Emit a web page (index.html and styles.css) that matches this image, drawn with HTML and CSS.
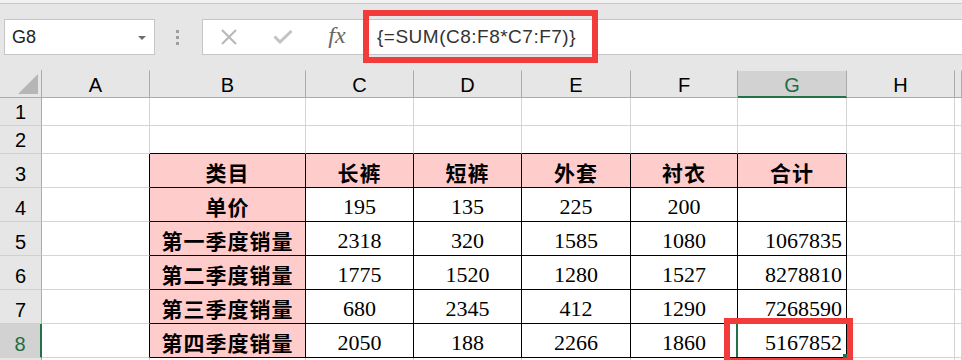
FILE: index.html
```html
<!DOCTYPE html>
<html lang="zh">
<head>
<meta charset="utf-8">
<link rel="stylesheet" href="styles.css">
</head>
<body>
<div class="toolbar">
  <div class="topstrip"></div>
  <div class="bar">
    <div class="namebox"><span class="nametext">G8</span><span class="dropdown"></span></div>
    <div class="dots"><i></i><i></i><i></i></div>
    <div class="fbox">
      <span class="ico"><svg width="18" height="16" viewBox="0 0 18 16"><path d="M2 1 L16 15 M16 1 L2 15" stroke="#b9b9b9" stroke-width="2.2" fill="none"/></svg></span>
      <span class="ico"><svg width="20" height="14" viewBox="0 0 20 14"><path d="M1.5 6.5 L7 12 L18.5 1" stroke="#c3c3c3" stroke-width="3" fill="none"/></svg></span>
      <span class="ico fx">fx</span>
      <span class="formula">{=SUM(C8:F8*C7:F7)}</span>
      <div class="redbox1"></div>
    </div>
  </div>
</div>
<div class="grid">
  <div class="corner"><svg width="20" height="20" viewBox="0 0 20 20"><path d="M20 0 L20 20 L0 20 Z" fill="#b6b6b6"/></svg></div>
  <div class="ch">A</div><div class="ch">B</div><div class="ch">C</div><div class="ch">D</div><div class="ch">E</div><div class="ch">F</div><div class="ch sel">G</div><div class="ch">H</div><div class="ch"></div>

  <div class="rh">1</div><div class="c"></div><div class="c"></div><div class="c"></div><div class="c"></div><div class="c"></div><div class="c"></div><div class="c"></div><div class="c"></div><div class="c"></div>

  <div class="rh">2</div><div class="c"></div><div class="c tb"></div><div class="c tb"></div><div class="c tb"></div><div class="c tb"></div><div class="c tb"></div><div class="c tb"></div><div class="c"></div><div class="c"></div>

  <div class="rh">3</div><div class="c tl"></div><div class="c t pk lb">类目</div><div class="c t pk lb">长裤</div><div class="c t pk lb">短裤</div><div class="c t pk lb">外套</div><div class="c t pk lb">衬衣</div><div class="c t pk lb">合计</div><div class="c"></div><div class="c"></div>

  <div class="rh">4</div><div class="c tl"></div><div class="c t pk lb">单价</div><div class="c t num">195</div><div class="c t num">135</div><div class="c t num">225</div><div class="c t num">200</div><div class="c t num r"></div><div class="c"></div><div class="c"></div>

  <div class="rh">5</div><div class="c tl"></div><div class="c t pk lb">第一季度销量</div><div class="c t num">2318</div><div class="c t num">320</div><div class="c t num">1585</div><div class="c t num">1080</div><div class="c t num r">1067835</div><div class="c"></div><div class="c"></div>

  <div class="rh">6</div><div class="c tl"></div><div class="c t pk lb">第二季度销量</div><div class="c t num">1775</div><div class="c t num">1520</div><div class="c t num">1280</div><div class="c t num">1527</div><div class="c t num r">8278810</div><div class="c"></div><div class="c"></div>

  <div class="rh">7</div><div class="c tl"></div><div class="c t pk lb">第三季度销量</div><div class="c t num">680</div><div class="c t num">2345</div><div class="c t num">412</div><div class="c t num">1290</div><div class="c t num r">7268590</div><div class="c"></div><div class="c"></div>

  <div class="rh rsel">8</div><div class="c tl"></div><div class="c t pk lb">第四季度销量</div><div class="c t num">2050</div><div class="c t num">188</div><div class="c t num">2266</div><div class="c t num">1860</div><div class="c t num r active">5167852<span class="selbar"></span><span class="handle"></span><span class="redbox2"></span></div><div class="c"></div><div class="c"></div>

  <div class="rh"></div><div class="c"></div><div class="c"></div><div class="c"></div><div class="c"></div><div class="c"></div><div class="c"></div><div class="c"></div><div class="c"></div><div class="c"></div>
</div>
</body>
</html>
```

FILE: styles.css
```css
* { box-sizing: border-box; }
body {
  margin: 0;
  width: 962px;
  height: 360px;
  overflow: hidden;
  background: #ffffff;
  font-family: "Liberation Sans", Arial, sans-serif;
  color: #000;
}
.toolbar {
  height: 70px;
  background: #e6e6e6;
}
.topstrip {
  height: 4px;
  background: #f1f1f1;
  border-bottom: 1px solid #c9c9c9;
}
.bar {
  display: flex;
  align-items: flex-start;
  padding: 15px 0 0 4px;
}
.namebox {
  width: 151px;
  height: 36px;
  background: #fff;
  border: 1px solid #c6c6c6;
  display: flex;
  align-items: center;
  justify-content: space-between;
  padding: 0 8px 0 7px;
}
.nametext {
  font-size: 18px;
  color: #222;
}
.dropdown {
  width: 0;
  height: 0;
  border-left: 4px solid transparent;
  border-right: 4px solid transparent;
  border-top: 4px solid #6d6d6d;
  margin-top: 1px;
}
.dots {
  margin-left: 21px;
  padding-top: 11px;
  display: flex;
  flex-direction: column;
  gap: 3px;
}
.dots i {
  display: block;
  width: 3px;
  height: 3px;
  background: #9e9e9e;
}
.fbox {
  position: relative;
  margin-left: 23px;
  flex: 1;
  height: 36px;
  background: #fff;
  border: 1px solid #c6c6c6;
  border-right: none;
  display: flex;
  align-items: center;
  padding-left: 15px;
}
.ico {
  width: 22px;
  display: flex;
  justify-content: center;
  align-items: center;
  margin-right: 32px;
}
.fx {
  font-family: "Liberation Serif", "DejaVu Serif", serif;
  font-style: italic;
  font-size: 24px;
  color: #666;
  margin-right: 29px;
  margin-top: -3px;
}
.formula {
  font-size: 19px;
  letter-spacing: 0.5px;
  color: #333;
}
.redbox1 {
  position: absolute;
  left: 160px;
  top: -10px;
  width: 235px;
  height: 53px;
  border: 6px solid #f23b3b;
}
.grid {
  display: grid;
  grid-template-columns: 42px 108px 156px 108px 108px 109px 107px 109px 108px 1fr;
  grid-template-rows: 28px 28px 28px repeat(7, 34px);
}
.corner {
  background: #e6e6e6;
  border-right: 1px solid #ababab;
  border-bottom: 1px solid #ababab;
  display: flex;
  align-items: flex-end;
  justify-content: flex-end;
  padding: 0 3px 3px 0;
}
.ch {
  background: #e6e6e6;
  border-right: 1px solid #ababab;
  border-bottom: 1px solid #ababab;
  border-top: 1px solid #e6e6e6;
  display: flex;
  align-items: center;
  justify-content: center;
  font-size: 20px;
  line-height: 1;
  padding-top: 1px;
}
.ch.sel {
  background: #d2d2d2;
  color: #1e6e45;
  border-bottom: 2px solid #217346;
  padding-top: 2px;
}
.rh {
  background: #e6e6e6;
  border-right: 1px solid #ababab;
  border-bottom: 1px solid #d0d0d0;
  display: flex;
  align-items: flex-end;
  justify-content: center;
  font-size: 20px;
  line-height: 1;
  padding-bottom: 3px;
}
.rh.rsel {
  background: #d2d2d2;
  color: #1e6e45;
  border-right: 2px solid #217346;
}
.c {
  border-right: 1px solid #d4d4d4;
  border-bottom: 1px solid #d4d4d4;
  background: #fff;
}
.tb { border-bottom-color: #000; }
.tl { border-right-color: #000; }
.t {
  border-right-color: #000;
  border-bottom-color: #000;
  display: flex;
  align-items: flex-end;
  justify-content: center;
}
.pk { background: #ffcccc; }
.lb {
  font-family: "Noto Sans CJK SC", sans-serif;
  font-weight: bold;
  font-size: 21px;
  line-height: 1;
  letter-spacing: 1px;
  padding-bottom: 4px;
}
.num {
  font-family: "Liberation Serif", "Times New Roman", serif;
  font-size: 22px;
  line-height: 1;
  padding-bottom: 3px;
}
.r {
  justify-content: flex-end;
  padding-right: 4px;
}
.active { position: relative; }
.selbar {
  position: absolute;
  left: -2px;
  top: 0;
  width: 2px;
  height: 33px;
  background: #217346;
}
.handle {
  position: absolute;
  right: -1px;
  bottom: -1px;
  width: 4px;
  height: 4px;
  background: #217346;
}
.redbox2 {
  position: absolute;
  left: -14px;
  top: -6px;
  width: 129px;
  height: 46px;
  border: 6px solid #f23b3b;
}
```
